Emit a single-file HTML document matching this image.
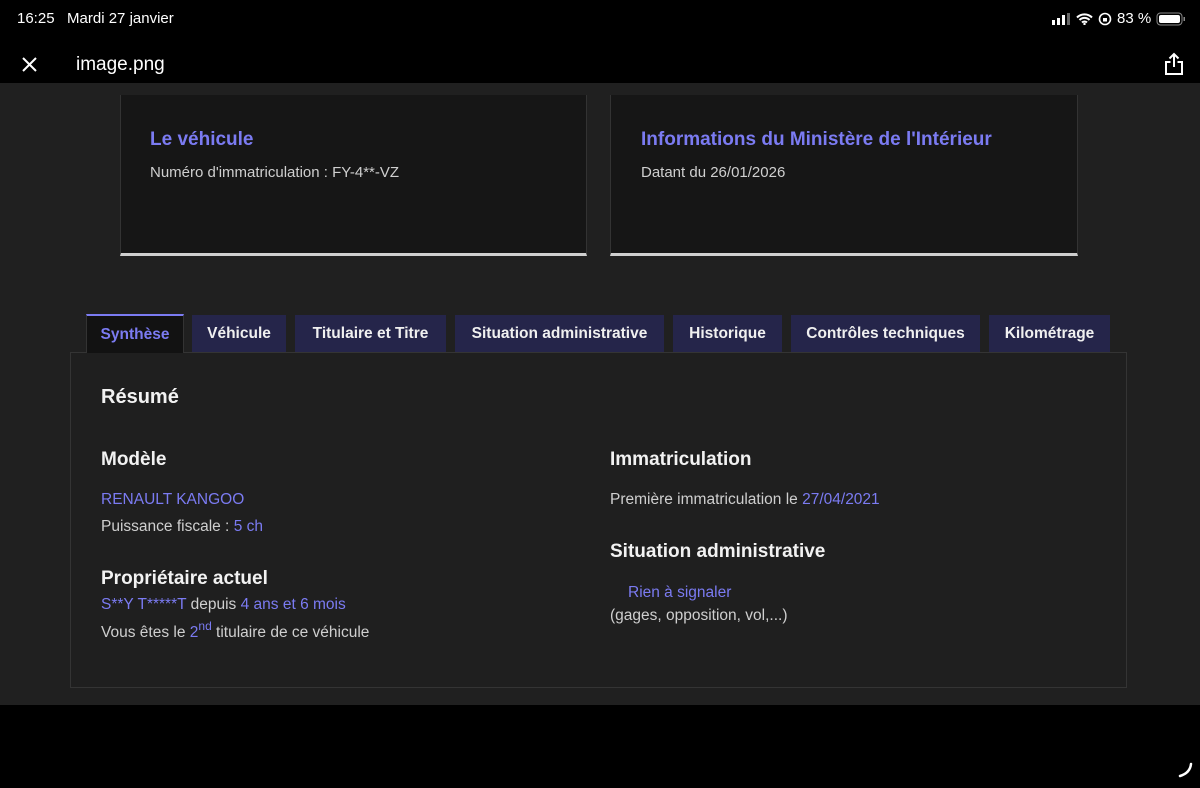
<!DOCTYPE html>
<html><head><meta charset="utf-8"><style>
*{margin:0;padding:0;box-sizing:border-box}
body{width:1200px;height:788px;background:#000;position:relative;overflow:hidden;font-family:"Liberation Sans","DejaVu Sans",sans-serif;color:#e6e6e6}
.a{position:absolute;white-space:nowrap}
.p{color:#7b7bf2}
.g{color:#cfcfcf}
.card{position:absolute;top:95px;height:161px;background:#161616;border:1px solid #333;border-top:none;border-bottom:3px solid #cfcfcf}
.tab{position:absolute;top:315px;height:37px;background:#25254a;color:#f0f0f0;font-weight:bold;font-size:15.5px;text-align:center;line-height:38px}
h3{font-weight:bold;font-size:19px;color:#f2f2f2;position:absolute;white-space:nowrap}
.t{font-size:15.5px;position:absolute;white-space:nowrap}
</style></head><body>
<div class="a" style="left:17px;top:10px;font-size:15px;color:#fff">16:25&nbsp;&nbsp; Mardi 27 janvier</div>
<div class="a" style="left:1052px;top:10px;font-size:15px;color:#fff;display:flex;align-items:center;gap:5px">
<svg width="19" height="12"><rect x="0" y="7" width="3" height="5" fill="#fff"/><rect x="5" y="5" width="3" height="7" fill="#fff"/><rect x="10" y="2" width="3" height="10" fill="#fff"/><rect x="15" y="0" width="3" height="12" fill="#666"/></svg>
<svg width="17" height="12" viewBox="0 0 17 12"><path d="M1 4.5a10.5 10.5 0 0 1 15 0M3.5 7a7 7 0 0 1 10 0M6 9.5a3.5 3.5 0 0 1 5 0" stroke="#fff" stroke-width="2" fill="none"/><circle cx="8.5" cy="11" r="1.2" fill="#fff"/></svg>
<svg width="14" height="14"><circle cx="7" cy="7" r="5.5" stroke="#fff" stroke-width="1.6" fill="none"/><rect x="5" y="6" width="4" height="3.5" fill="#fff"/></svg>
<span>83 %</span>
<svg width="30" height="14"><rect x="1" y="1" width="25" height="12" rx="3.5" stroke="#888" fill="none"/><rect x="3" y="3" width="21" height="8" rx="2" fill="#fff"/><rect x="27.5" y="5" width="1.5" height="4" fill="#888"/></svg>
</div>
<svg class="a" style="left:21px;top:56px" width="17" height="17"><path d="M2 2L15 15M15 2L2 15" stroke="#fff" stroke-width="2"/></svg>
<div class="a" style="left:76px;top:54px;font-size:19px;color:#fff">image.png</div>
<svg class="a" style="left:1163px;top:52px" width="22" height="24"><path d="M11 2v13M6.5 6.5L11 2l4.5 4.5M7.5 10H3v12h16V10h-4.5" stroke="#fff" stroke-width="2" fill="none"/></svg>
<div class="a" style="left:0;top:83px;width:1200px;height:622px;background:#202020"></div>
<div class="card" style="left:120px;width:467px"></div>
<div class="card" style="left:610px;width:468px"></div>
<div class="a p" style="left:150px;top:129px;font-size:19px;font-weight:bold">Le véhicule</div>
<div class="a g" style="left:150px;top:164px;font-size:15px">Numéro d'immatriculation : FY-4**-VZ</div>
<div class="a p" style="left:641px;top:129px;font-size:19px;font-weight:bold">Informations du Ministère de l'Intérieur</div>
<div class="a g" style="left:641px;top:164px;font-size:15px">Datant du 26/01/2026</div>
<div class="a" style="left:70px;top:352px;width:1057px;height:336px;border:1px solid #343434;background:#1f1f1f"></div>
<div class="tab" style="left:86px;width:98px;background:#121212;border-top:2px solid #7b7bf2;border-left:1px solid #333;border-right:1px solid #333;height:39px;top:314px;color:#7b7bf2;line-height:38px">Synthèse</div>
<div class="tab" style="left:192px;width:94px">Véhicule</div>
<div class="tab" style="left:295px;width:151px">Titulaire et Titre</div>
<div class="tab" style="left:455px;width:209px">Situation administrative</div>
<div class="tab" style="left:673px;width:109px">Historique</div>
<div class="tab" style="left:791px;width:189px">Contrôles techniques</div>
<div class="tab" style="left:989px;width:121px">Kilométrage</div>
<h3 style="left:101px;top:386px;font-size:20px">Résumé</h3>
<h3 style="left:101px;top:449px">Modèle</h3>
<div class="t p" style="left:101px;top:491px">RENAULT KANGOO</div>
<div class="t g" style="left:101px;top:518px">Puissance fiscale : <span class="p">5 ch</span></div>
<h3 style="left:101px;top:568px">Propriétaire actuel</h3>
<div class="t g" style="left:101px;top:596px"><span class="p">S**Y T*****T</span> depuis <span class="p">4 ans et 6 mois</span></div>
<div class="t g" style="left:101px;top:619px">Vous êtes le <span class="p">2<sup style="font-size:12px;vertical-align:7px">nd</sup></span> titulaire de ce véhicule</div>
<h3 style="left:610px;top:449px">Immatriculation</h3>
<div class="t g" style="left:610px;top:491px">Première immatriculation le <span class="p">27/04/2021</span></div>
<h3 style="left:610px;top:541px">Situation administrative</h3>
<div class="t p" style="left:628px;top:584px">Rien à signaler</div>
<div class="t g" style="left:610px;top:607px">(gages, opposition, vol,...)</div>
<svg class="a" style="left:1172px;top:760px" width="24" height="20"><path d="M19 4q-1 9-11 12" stroke="#fff" stroke-width="2.5" fill="none" stroke-linecap="round"/></svg>
</body></html>
